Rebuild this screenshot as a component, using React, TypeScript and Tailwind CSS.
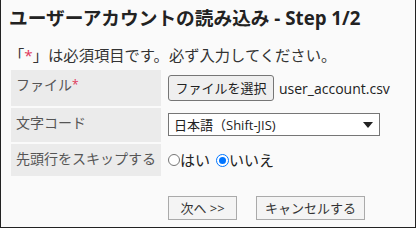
export default function App() {
  return (
    <div className="w-[416px] h-[228px] bg-[#fafafa] border-x border-b border-[#222] pl-[8px] pt-[6px] font-['Open_Sans','Noto_Sans_CJK_JP',sans-serif] text-[#333]">
      <h1 className="text-[18.7px] font-bold leading-[24px] text-[#222] whitespace-nowrap">
        ユーザーアカウントの読み込み - Step 1/2
      </h1>
      <p className="mt-[15px] text-[15.3px] leading-[20px] whitespace-nowrap">
        「<span className="text-[#e0365a]">*</span>」は必須項目です。必ず入力してください。
      </p>
      <div className="mt-[5px] ml-[2px] grid grid-cols-[150px_240px] gap-[2px]">
        <div className="h-[36px] bg-[#ebebeb] px-[5px] pt-[5px] text-[14px] leading-[20px] text-[#555]">
          ファイル<span className="text-[#e0365a] text-[12px] align-top">*</span>
        </div>
        <div className="h-[36px] pl-[5px] flex items-center">
          <button className="h-[26px] w-[106px] border border-[#767676] rounded-[3px] bg-[#efefef] text-[13px] leading-[18px] text-[#222]">
            ファイルを選択
          </button>
          <span className="ml-[5px] text-[14px] text-[#222]">user_account.csv</span>
        </div>

        <div className="h-[34px] bg-[#ebebeb] px-[5px] pt-[5px] text-[14px] leading-[20px] text-[#555]">
          文字コード
        </div>
        <div className="h-[34px] pl-[5px] pt-[5px]">
          <div className="h-[23px] w-[212px] border border-[#767676] bg-white flex items-center justify-between pl-[5px] pr-[6px]">
            <span className="text-[13px] leading-[18px] text-[#222]">日本語（Shift-JIS)</span>
            <svg width="10" height="6" viewBox="0 0 10 6">
              <path d="M0 0 L10 0 L5 6 Z" fill="#222" />
            </svg>
          </div>
        </div>

        <div className="h-[32px] bg-[#ebebeb] px-[5px] pt-[5px] text-[14px] leading-[20px] text-[#555] whitespace-nowrap">
          先頭行をスキップする
        </div>
        <div className="h-[32px] pl-[5px] flex items-center text-[15px] text-[#222]">
          <span className="w-[12px] h-[12px] rounded-full border border-[#767676] bg-white" />
          <span className="mr-[6px]">はい</span>
          <span className="w-[13px] h-[13px] rounded-full border-[1.5px] border-[#0075ff] bg-white flex items-center justify-center">
            <span className="w-[7px] h-[7px] rounded-full bg-[#0075ff]" />
          </span>
          <span>いいえ</span>
        </div>
      </div>
      <div className="mt-[20px] pl-[159px] flex gap-[19px]">
        <button className="h-[24px] w-[69px] border border-[#aaa] bg-[#f4f4f4] text-[13px] leading-[18px] text-[#333]">
          次へ &gt;&gt;
        </button>
        <button className="h-[24px] w-[109px] border border-[#aaa] bg-[#f4f4f4] text-[13px] leading-[18px] text-[#333]">
          キャンセルする
        </button>
      </div>
    </div>
  );
}
